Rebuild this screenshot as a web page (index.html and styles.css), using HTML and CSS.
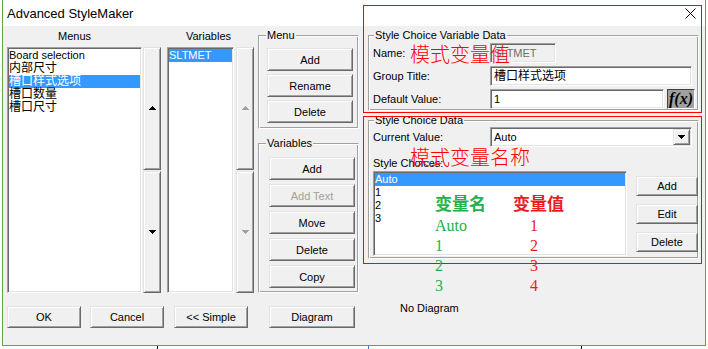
FILE: index.html
```html
<!DOCTYPE html>
<html>
<head>
    <title>Advanced StyleMaker</title>
    <link rel="stylesheet" href="styles.css">
</head>
<body>
    <div class="window">
        <div class="titlebar">
            <span class="title">Advanced StyleMaker</span>
            <svg class="close" width="11" height="11" viewBox="0 0 11 11"><path d="M0.5 0.5L10.5 10.5M10.5 0.5L0.5 10.5" stroke="#000" stroke-width="1" fill="none"/></svg>
        </div>
        <div class="client">
            <div class="left">
                <div class="left-top">
                    <div class="menus-col">
                        <div class="col-label">Menus</div>
                        <div class="list-row">
                            <div class="listbox menus-list">
                                <div class="item">Board selection</div>
                                <div class="item cjk">内部尺寸</div>
                                <div class="item cjk sel">槽口样式选项</div>
                                <div class="item cjk">槽口数量</div>
                                <div class="item cjk">槽口尺寸</div>
                            </div>
                            <div class="spin">
                                <div class="btn spin-btn"><svg width="7" height="4" viewBox="0 0 7 4"><path d="M3 0h1v1h1v1h1v1h1v1H0V3h1V2h1V1h1z"/></svg></div>
                                <div class="btn spin-btn"><svg width="7" height="4" viewBox="0 0 7 4"><path d="M0 0h7v1H6v1H5v1H4v1H3V3H2V2H1V1H0z"/></svg></div>
                            </div>
                        </div>
                    </div>
                    <div class="vars-col">
                        <div class="col-label">Variables</div>
                        <div class="list-row">
                            <div class="listbox vars-list">
                                <div class="item sel">SLTMET</div>
                            </div>
                            <div class="spin off">
                                <div class="btn spin-btn"><svg width="7" height="4" viewBox="0 0 7 4"><path d="M3 0h1v1h1v1h1v1h1v1H0V3h1V2h1V1h1z"/></svg></div>
                                <div class="btn spin-btn"><svg width="7" height="4" viewBox="0 0 7 4"><path d="M0 0h7v1H6v1H5v1H4v1H3V3H2V2H1V1H0z"/></svg></div>
                            </div>
                        </div>
                    </div>
                    <div class="groups-col">
                        <div class="group menu-group">
                            <span class="cap">Menu</span>
                            <button class="btn">Add</button>
                            <button class="btn">Rename</button>
                            <button class="btn">Delete</button>
                        </div>
                        <div class="group vars-group">
                            <span class="cap">Variables</span>
                            <button class="btn">Add</button>
                            <button class="btn disabled">Add Text</button>
                            <button class="btn">Move</button>
                            <button class="btn">Delete</button>
                            <button class="btn">Copy</button>
                        </div>
                    </div>
                </div>
                <div class="left-bottom">
                    <button class="btn ok">OK</button>
                    <button class="btn cancel">Cancel</button>
                    <button class="btn simple">&lt;&lt; Simple</button>
                    <button class="btn diagram">Diagram</button>
                </div>
            </div>
            <div class="right">
                <div class="group g1">
                    <span class="cap">Style Choice Variable Data</span>
                    <div class="label">Name:</div>
                    <div><div class="field disabled">SLTMET</div></div>
                    <div class="label">Group Title:</div>
                    <div><div class="field wide cjk">槽口样式选项</div></div>
                    <div class="label">Default Value:</div>
                    <div class="default-row">
                        <div class="field">1</div>
                        <div class="fx">f(x)</div>
                    </div>
                </div>
                <div class="group g2">
                    <span class="cap">Style Choice Data</span>
                    <div class="current-row">
                        <div class="label">Current Value:</div>
                        <div class="field combo">
                            <span class="combo-text">Auto</span>
                            <span class="btn combo-btn"><svg width="7" height="4" viewBox="0 0 7 4"><path d="M0 0h7v1H6v1H5v1H4v1H3V3H2V2H1V1H0z"/></svg></span>
                        </div>
                    </div>
                    <div class="choices-label">Style Choices:</div>
                    <div class="choices-row">
                        <div class="listbox choices-list">
                            <div class="item sel">Auto</div>
                            <div class="item">1</div>
                            <div class="item">2</div>
                            <div class="item">3</div>
                        </div>
                        <div class="side-btns">
                            <button class="btn">Add</button>
                            <button class="btn">Edit</button>
                            <button class="btn">Delete</button>
                        </div>
                    </div>
                </div>
                <div class="no-diagram">No Diagram</div>
            </div>
        </div>
    </div>

    <!-- red / green notes drawn over the dialog -->
    <div class="note-box box-a"></div>
    <div class="note-box box-b"></div>
    <div class="note note-a">模式变量值</div>
    <div class="note note-b">模式变量名称</div>
    <div class="note-col green">
        <div class="note-head">变量名</div>
        <div>Auto</div>
        <div>1</div>
        <div>2</div>
        <div>3</div>
    </div>
    <div class="note-col red">
        <div class="note-head">变量值</div>
        <div class="num">1</div>
        <div class="num">2</div>
        <div class="num">3</div>
        <div class="num">4</div>
    </div>

    <div class="mark" style="left: 157px"></div>
    <div class="mark blue" style="left: 368px"></div>
    <div class="mark" style="left: 581px"></div>
</body>
</html>
```

FILE: styles.css
```css
* {
    box-sizing: border-box;
}
body {
    margin: 0;
    background: #fff;
    font-family: "Liberation Sans", "Noto Sans CJK SC", sans-serif;
    font-size: 11px;
    color: #000;
}
.window {
    width: 704px;
    height: 346px;
    margin-left: 2px;
    border: 1px solid #6aa236;
    border-top: none;
    background: #f0f0f0;
}
.titlebar {
    height: 26px;
    background: #fff;
    display: flex;
    align-items: center;
    padding: 0 9px 0 4px;
    font-size: 13px;
}
.titlebar .close {
    margin-left: auto;
    margin-top: 1px;
}
.client {
    display: flex;
    height: 319px;
    padding-left: 4px;
}
.left {
    width: 353px;
    display: flex;
    flex-direction: column;
}
.left-top {
    display: flex;
    height: 267px;
}
.menus-col {
    width: 154px;
    display: flex;
    flex-direction: column;
}
.col-label {
    height: 21px;
    line-height: 21px;
    text-align: center;
}
.menus-col .col-label {
    width: 135px;
}
.list-row {
    display: flex;
    height: 246px;
    gap: 1px;
}
.vars-col {
    width: 87px;
    margin-left: 6px;
    display: flex;
    flex-direction: column;
}
.vars-col .col-label {
    padding-right: 4px;
}
.vars-col .list-row {
    gap: 2px;
}

/* sunken white boxes */
.listbox,
.field {
    background: #fff;
    border: 1px solid;
    border-color: #a0a0a0 #fff #fff #a0a0a0;
    box-shadow: inset 1px 1px #696969, inset -1px -1px #e3e3e3;
}
.listbox {
    padding: 1px;
}
.menus-list {
    width: 135px;
}
.vars-list {
    width: 67px;
}
.item {
    height: 13px;
    line-height: 13px;
    white-space: nowrap;
}
.item.cjk,
.field.cjk {
    font-size: 12px;
}
.item.sel {
    background: #3399ff;
    color: #fff;
}

/* raised buttons */
.btn {
    background: #f0f0f0;
    border: 1px solid;
    border-color: #e3e3e3 #696969 #696969 #e3e3e3;
    box-shadow: inset 1px 1px #fff, inset -1px -1px #a0a0a0;
    display: flex;
    align-items: center;
    justify-content: center;
    padding: 0;
    font: inherit;
    color: #000;
}
.btn.disabled {
    color: #a0a0a0;
}
.spin {
    width: 18px;
    display: flex;
    flex-direction: column;
    gap: 1px;
}
.spin-btn {
    flex: 1;
}
.spin svg {
    fill: #000;
}
.spin.off svg {
    fill: #a0a0a0;
}

/* etched group boxes */
.group {
    position: relative;
    border: 1px solid;
    border-color: #a0a0a0 #fff #fff #a0a0a0;
    box-shadow: inset 1px 1px #fff, inset -1px -1px #a0a0a0;
}
.cap {
    position: absolute;
    top: -7px;
    left: 7px;
    padding: 0 1px;
    line-height: 13px;
    background: #f0f0f0;
    white-space: nowrap;
}
.groups-col {
    width: 101px;
    margin-left: 4px;
    display: flex;
    flex-direction: column;
}
.menu-group {
    margin-top: 9px;
    height: 94px;
    padding: 12px 0 0 8px;
    display: flex;
    flex-direction: column;
    gap: 3px;
}
.vars-group {
    margin-top: 14px;
    height: 150px;
    padding: 13px 0 0 10px;
    display: flex;
    flex-direction: column;
    gap: 4px;
}
.groups-col .btn {
    width: 86px;
    height: 23px;
}
.left-bottom {
    display: flex;
    margin-top: 13px;
}
.left-bottom .btn {
    width: 74px;
    height: 22px;
}
.left-bottom .cancel {
    margin-left: 9px;
}
.left-bottom .simple {
    margin-left: 10px;
}
.left-bottom .diagram {
    width: 86px;
    margin-left: 21px;
}

/* right side */
.right {
    width: 331px;
    margin-left: 8px;
}
.right .cap {
    left: 5px;
}
.label {
    white-space: nowrap;
}
.g1 {
    margin-top: 9px;
    height: 76px;
    padding: 7px 3px 0 4px;
    display: grid;
    grid-template-columns: 117px 205px;
    grid-auto-rows: 20px;
    row-gap: 3px;
    align-items: center;
}
.field {
    height: 20px;
    line-height: 18px;
    padding: 0 3px;
    white-space: nowrap;
}
.field.disabled {
    width: 66px;
    background: #f0f0f0;
    color: #6d6d6d;
}
.field.wide {
    width: 202px;
}
.default-row {
    display: flex;
    gap: 3px;
}
.default-row .field {
    width: 174px;
}
.fx {
    width: 28px;
    height: 20px;
    background: #a0a0a0;
    border: 1px solid;
    border-color: #404040 #fff #fff #404040;
    display: flex;
    align-items: center;
    justify-content: center;
    font: bold italic 16px "Liberation Serif", serif;
}
.g2 {
    margin-top: 9px;
    height: 139px;
    padding: 6px 0 0 4px;
}
.current-row {
    display: grid;
    grid-template-columns: 117px 202px;
    align-items: center;
    height: 20px;
}
.combo {
    display: flex;
    padding: 1px 1px 1px 3px;
    line-height: 16px;
}
.combo-text {
    flex: 1;
}
.combo-btn {
    width: 17px;
    height: 16px;
}
.choices-label {
    margin-top: 8px;
    height: 16px;
    line-height: 16px;
}
.choices-row {
    display: flex;
}
.choices-list {
    width: 254px;
    height: 85px;
}
.side-btns {
    margin-left: 9px;
    padding-top: 5px;
    display: flex;
    flex-direction: column;
    gap: 8px;
}
.side-btns .btn {
    width: 62px;
    height: 20px;
}
.no-diagram {
    margin-top: 43px;
    padding-left: 32px;
    line-height: 13px;
}

/* annotations */
.note-box {
    position: absolute;
    border: 1px solid #ff0000;
}
.box-a {
    left: 363px;
    top: 5px;
    width: 339px;
    height: 108px;
}
.box-b {
    left: 363px;
    top: 116px;
    width: 339px;
    height: 148px;
}
.note {
    position: absolute;
    font-family: "Noto Sans CJK SC", sans-serif;
    font-weight: 300;
    font-size: 20px;
    line-height: 20px;
    color: #ff0000;
    white-space: nowrap;
}
.note-a {
    left: 410px;
    top: 44px;
}
.note-b {
    left: 410px;
    top: 147px;
}
.note-col {
    position: absolute;
    top: 193px;
    font-family: "Liberation Serif", serif;
    font-size: 16px;
    line-height: 20px;
}
.note-head {
    height: 23px;
    font-family: "Noto Sans CJK SC", sans-serif;
    font-weight: bold;
    font-size: 17px;
}
.note-col.green {
    left: 435px;
    color: #22b14c;
}
.note-col.red {
    left: 513px;
    color: #ed1c24;
}
.note-col .num {
    padding-left: 17px;
}
.mark {
    position: absolute;
    top: 346px;
    width: 1px;
    height: 3px;
    background: #000;
}
.mark.blue {
    background: #3a6fd8;
}
```
